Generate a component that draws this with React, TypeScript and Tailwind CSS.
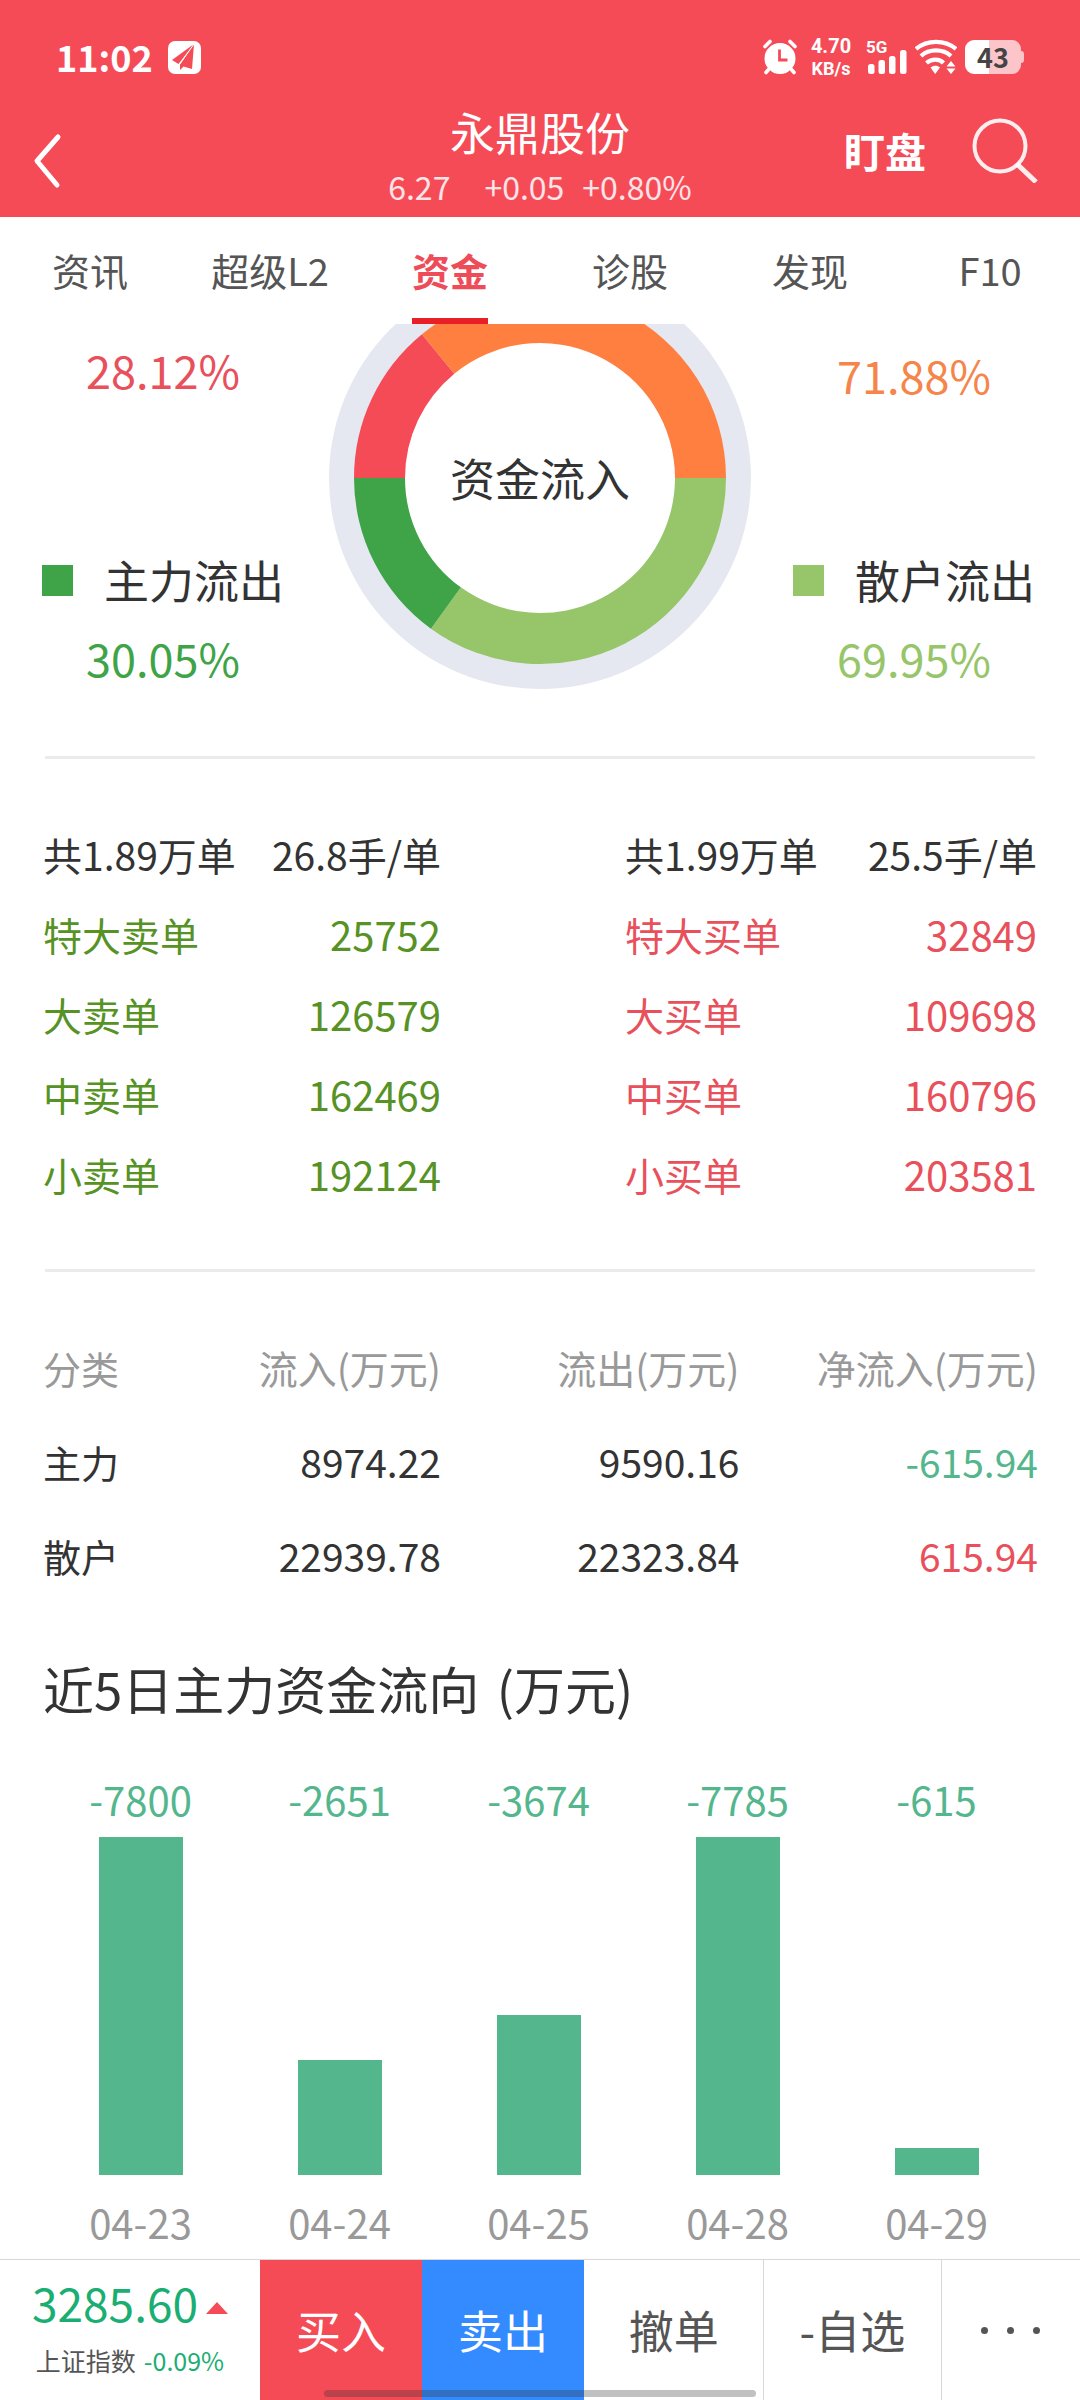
import type { ReactNode } from "react";

const tabs = ["资讯", "超级L2", "资金", "诊股", "发现", "F10"];

const sells = [
  ["特大卖单", "25752"],
  ["大卖单", "126579"],
  ["中卖单", "162469"],
  ["小卖单", "192124"],
];
const buys = [
  ["特大买单", "32849"],
  ["大买单", "109698"],
  ["中买单", "160796"],
  ["小买单", "203581"],
];

const days = [
  { date: "04-23", value: "-7800", height: 338 },
  { date: "04-24", value: "-2651", height: 115 },
  { date: "04-25", value: "-3674", height: 160 },
  { date: "04-28", value: "-7785", height: 338 },
  { date: "04-29", value: "-615", height: 27 },
];

function StatusBar() {
  return (
    <div className="flex h-[114px] items-center pl-[56px] pr-[56px] font-bold">
      <span className="pb-[3px] text-[36px] leading-[40px]">11:02</span>
      <svg className="ml-[15px] h-[33px] w-[33px]" viewBox="0 0 33 33" aria-hidden="true">
        <rect width="33" height="33" rx="7" fill="#fff" />
        <path d="M26 3 4 19l6.500 4Z" fill="#f54b57" />
        <path d="M26 3 12 23.500v5.500l3.500-3.500L24 28Z" fill="#f54b57" />
        <path d="M26 3 11.500 23.500" stroke="#fff" strokeWidth="1" />
      </svg>
      <div className="ml-auto flex items-center">
        <svg className="h-[36px] w-[36px]" viewBox="0 0 36 36" aria-hidden="true">
          <circle cx="18" cy="19.500" r="15.500" fill="#fff" />
          <path d="M3 7.500 8 2.500M33 7.500 28 2.500M7 30l-3.500 3.500M29 30l3.500 3.500" stroke="#f54b57" strokeWidth="7" />
          <circle cx="18" cy="19.500" r="15" fill="#fff" />
          <path d="M3 7.500 8 2.500M33 7.500 28 2.500M7 30l-3 3.500M29 30l3 3.500" stroke="#fff" strokeWidth="3.600" strokeLinecap="round" />
          <path d="M17.500 10.500v10.500h8" fill="none" stroke="#f54b57" strokeWidth="2.800" />
        </svg>
        <div className="ml-[11px] w-[44px] text-center font-['Roboto',sans-serif]">
          <div className="text-[20px] leading-[23px]">4.70</div>
          <div className="text-[18px] leading-[21px]">KB/s</div>
        </div>
        <div className="ml-[13px] flex w-[42px] flex-col">
          <span className="font-['Roboto',sans-serif] text-[17px] leading-[14px]">5G</span>
          <svg className="-mt-[4px] ml-[2px] h-[24px] w-[40px]" viewBox="0 0 40 24" fill="#fff" aria-hidden="true">
            <rect x="0" y="14" width="6.500" height="10" rx="2.500" />
            <rect x="10.500" y="10" width="6.500" height="14" rx="2.500" />
            <rect x="21" y="6" width="6.500" height="18" rx="2.500" />
            <rect x="32" y="0" width="6.500" height="24" rx="2.500" />
          </svg>
        </div>
        <svg className="ml-[7px] h-[36px] w-[42px]" viewBox="0 0 42 36" fill="none" stroke="#fff" strokeWidth="4.200" aria-hidden="true">
          <path d="M1 10C12 .5 30 .5 41 10M6 17c8-7.500 22-7.500 30 0M11.500 24c5-4.500 13-4.500 17 0" />
          <path d="M15.500 28.500c3-2.500 7-2.500 9.500 0L20.200 35Z" fill="#fff" stroke="none" />
          <path d="M36 22l4.500 5.500h-9ZM36 35l-4.500-5.500h9Z" fill="#fff" stroke="none" />
        </svg>
        <div className="ml-[8px] flex items-center">
          <div className="flex h-[34px] w-[56px] items-center justify-center rounded-[9px] bg-linear-to-r from-white from-43% to-[#fcc5ca] to-43% text-[27px] leading-[34px] text-[#444]">
            43
          </div>
          <div className="h-[12px] w-[3px] rounded-r-full bg-[#fcc5ca]" />
        </div>
      </div>
    </div>
  );
}

function Header() {
  return (
    <header className="bg-[#f54b57] text-white">
      <StatusBar />
      <div className="grid h-[103px] grid-cols-[1fr_auto_1fr]">
        <button aria-label="返回" className="ml-[32px] h-[94px] w-[40px]">
          <svg className="h-[56px] w-[32px]" viewBox="0 0 32 56" fill="none" stroke="#fff" strokeWidth="5" strokeLinecap="round" strokeLinejoin="round" aria-hidden="true">
            <path d="M26 4 5 28l20 24" />
          </svg>
        </button>
        <div className="text-center">
          <h1 className="text-[45px] leading-[36px]">永鼎股份</h1>
          <p className="mt-[16px] flex text-[32px] leading-[40px] text-white/85">
            <span className="mr-[34px]">6.27</span>
            <span className="mr-[18px]">+0.05</span>
            <span>+0.80%</span>
          </p>
        </div>
        <div className="mr-[42px] flex h-[72px] items-center justify-end gap-[46px]">
          <button className="text-[41px] leading-[48px] font-bold">盯盘</button>
          <button aria-label="搜索">
            <svg className="h-[66px] w-[66px]" viewBox="0 0 66 66" fill="none" stroke="#fff" strokeOpacity=".9" strokeWidth="4" aria-hidden="true">
              <circle cx="28" cy="29" r="25.500" />
              <path d="M45 47 64 65" strokeWidth="5" />
            </svg>
          </button>
        </div>
      </div>
    </header>
  );
}

function Tabs() {
  return (
    <nav className="grid h-[107px] grid-cols-6 text-[38px] text-[#555]">
      {tabs.map((t) => (
        <div key={t} className="flex justify-center">
          {t === "资金" ? (
            <button className="border-b-6 border-[#e81f27] pt-[4px] font-bold text-[#ee4c58]">{t}</button>
          ) : (
            <button className="pb-[2px]">{t}</button>
          )}
        </div>
      ))}
    </nav>
  );
}

function Legend({ marker, name, children }: { marker: string; name: string; children: ReactNode }) {
  return (
    <div className="flex w-[242px] flex-col pt-[14px] text-center text-[45px] leading-[64px]">
      {children}
      <div className="flex items-center justify-between whitespace-nowrap text-[#333]">
        <span className={`size-[31px] ${marker}`} />
        {name}
      </div>
    </div>
  );
}

function arc(from: number, to: number) {
  const point = (r: number, deg: number) => {
    const a = (deg * Math.PI) / 180;
    return `${211 + r * Math.cos(a)} ${154 + r * Math.sin(a)}`;
  };
  return `M${point(186, from)}A186 186 0 0 1 ${point(186, to)}L${point(135, to)}A135 135 0 0 0 ${point(135, from)}Z`;
}

function Flow() {
  return (
    <section className="grid h-[432px] grid-cols-[1fr_auto_1fr]">
      <div className="justify-self-start pl-[42px]">
        <Legend marker="bg-[#3fa447]" name="主力流出">
          <p className="mb-[146px] text-[#e8505b]">28.12%</p>
        </Legend>
        <p className="mt-[18px] text-center text-[45px] leading-[56px] text-[#3fa447]">30.05%</p>
      </div>
      <div className="grid h-[365px]">
        <svg className="col-start-1 row-start-1 h-[365px] w-[422px]" viewBox="0 0 422 365" role="img" aria-label="资金流入">
          <circle cx="211" cy="154" r="211" fill="#e5e8f1" />
          <circle cx="211" cy="154" r="136" fill="#fff" />
          <path d={arc(180, 230.600)} fill="#f54b57" />
          <path d={arc(230.600, 360)} fill="#ff7f41" />
          <path d={arc(0, 125.900)} fill="#96c56a" />
          <path d={arc(125.900, 180)} fill="#3fa447" />
        </svg>
        <span className="col-start-1 row-start-1 mt-[122px] text-center text-[45px] leading-[64px] text-[#333]">资金流入</span>
      </div>
      <div className="justify-self-end pr-[45px]">
        <Legend marker="bg-[#96c56a]" name="散户流出">
          <p className="mt-[5px] mb-[141px] text-[#f5854a]">71.88%</p>
        </Legend>
        <p className="mt-[18px] text-center text-[45px] leading-[56px] text-[#96c56a]">69.95%</p>
      </div>
    </section>
  );
}

function Orders({ total, average, rows, tone }: { total: string; average: string; rows: string[][]; tone: string }) {
  return (
    <table className={`w-full text-[39px] ${tone}`}>
      <thead>
        <tr className="h-[80px] text-[#333]">
          <th className="text-left font-normal whitespace-nowrap">{total}</th>
          <th className="text-right font-normal whitespace-nowrap">{average}</th>
        </tr>
      </thead>
      <tbody>
        {rows.map(([name, n]) => (
          <tr key={name} className="h-[80px]">
            <td>{name}</td>
            <td className="text-right text-[40px]">{n}</td>
          </tr>
        ))}
      </tbody>
    </table>
  );
}

function Summary() {
  return (
    <table className="mx-[43px] mt-[48px] w-[calc(100%-85px)] table-fixed text-right text-[39px] text-[#333]">
      <thead>
        <tr className="h-[94px] text-[#999]">
          <th className="w-[10%] text-left text-[38px] font-normal">分类</th>
          <th className="w-[30%] font-normal">流入(万元)</th>
          <th className="w-[30%] font-normal">流出(万元)</th>
          <th className="w-[30%] font-normal">净流入(万元)</th>
        </tr>
      </thead>
      <tbody>
        <tr className="h-[94px]">
          <td className="text-left text-[38px]">主力</td>
          <td>8974.22</td>
          <td>9590.16</td>
          <td className="text-[#54b68d]">-615.94</td>
        </tr>
        <tr className="h-[94px]">
          <td className="text-left text-[38px]">散户</td>
          <td>22939.78</td>
          <td>22323.84</td>
          <td className="text-[#e8505b]">615.94</td>
        </tr>
      </tbody>
    </table>
  );
}

function Bars() {
  return (
    <div className="mt-[49px] grid grid-cols-5 pl-[41px] pr-[44px] text-center text-[40px] leading-[60px]">
      {days.map((d) => (
        <div key={d.date} className="flex flex-col items-center">
          <span className="text-[#54b68d]">{d.value}</span>
          <div className="flex h-[346px] items-end">
            <div className="w-[84px] bg-[#54b68d]" style={{ height: d.height }} />
          </div>
          <span className="mt-[17px] text-[#999]">{d.date}</span>
        </div>
      ))}
    </div>
  );
}

function Footer() {
  return (
    <footer className="relative mt-auto flex h-[141px] border-t border-[#d8d8d8] text-[45px] text-[#555]">
      <div className="flex w-[260px] flex-col items-center pt-[14px]">
        <div className="flex items-center text-[46px] leading-[56px] text-[#1aae73]">
          3285.60
          <svg className="mt-[12px] ml-[8px] h-[12px] w-[22px]" viewBox="0 0 22 12" aria-hidden="true">
            <path d="M0 12 11 0l11 12Z" fill="#f54b57" />
          </svg>
        </div>
        <div className="mt-[12px] flex gap-[8px] text-[25px] leading-[36px]">
          <span>上证指数</span>
          <span className="text-[#1aae73]">-0.09%</span>
        </div>
      </div>
      <button className="w-[15%] bg-[#f54b57] text-white">买入</button>
      <button className="w-[15%] bg-[#348aff] text-white">卖出</button>
      <button className="flex-[180] border-r border-[#d8d8d8]">撤单</button>
      <button className="flex-[177] border-r border-[#d8d8d8]">-自选</button>
      <button aria-label="更多" className="flex flex-[139] items-center justify-center gap-[19px]">
        <span className="size-[7px] rounded-full bg-[#555]" />
        <span className="size-[7px] rounded-full bg-[#555]" />
        <span className="size-[7px] rounded-full bg-[#555]" />
      </button>
      <div className="absolute bottom-[3px] left-[30%] h-[7px] w-[40%] rounded-full bg-[#333]/30" />
    </footer>
  );
}

export default function App() {
  return (
    <div className="flex min-h-screen flex-col bg-white font-['Noto_Sans_CJK_SC',sans-serif]">
      <Header />
      <Tabs />
      <main>
        <Flow />
        <hr className="ml-[45px] mr-[45px] border-t-3 border-[#ebebeb]" />
        <div className="mt-[55px] mb-[55px] grid grid-cols-[398fr_412fr] gap-[184px] pl-[43px] pr-[43px]">
          <Orders total="共1.89万单" average="26.8手/单" rows={sells} tone="text-[#569224]" />
          <Orders total="共1.99万单" average="25.5手/单" rows={buys} tone="text-[#e8505b]" />
        </div>
        <hr className="ml-[45px] mr-[45px] border-t-3 border-[#ebebeb]" />
        <Summary />
        <h2 className="mt-[54px] pl-[43px] text-[51px] leading-[64px] text-[#333]">
          近5日主力资金流向 <span className="ml-[6px]">(万元)</span>
        </h2>
        <Bars />
      </main>
      <Footer />
    </div>
  );
}
